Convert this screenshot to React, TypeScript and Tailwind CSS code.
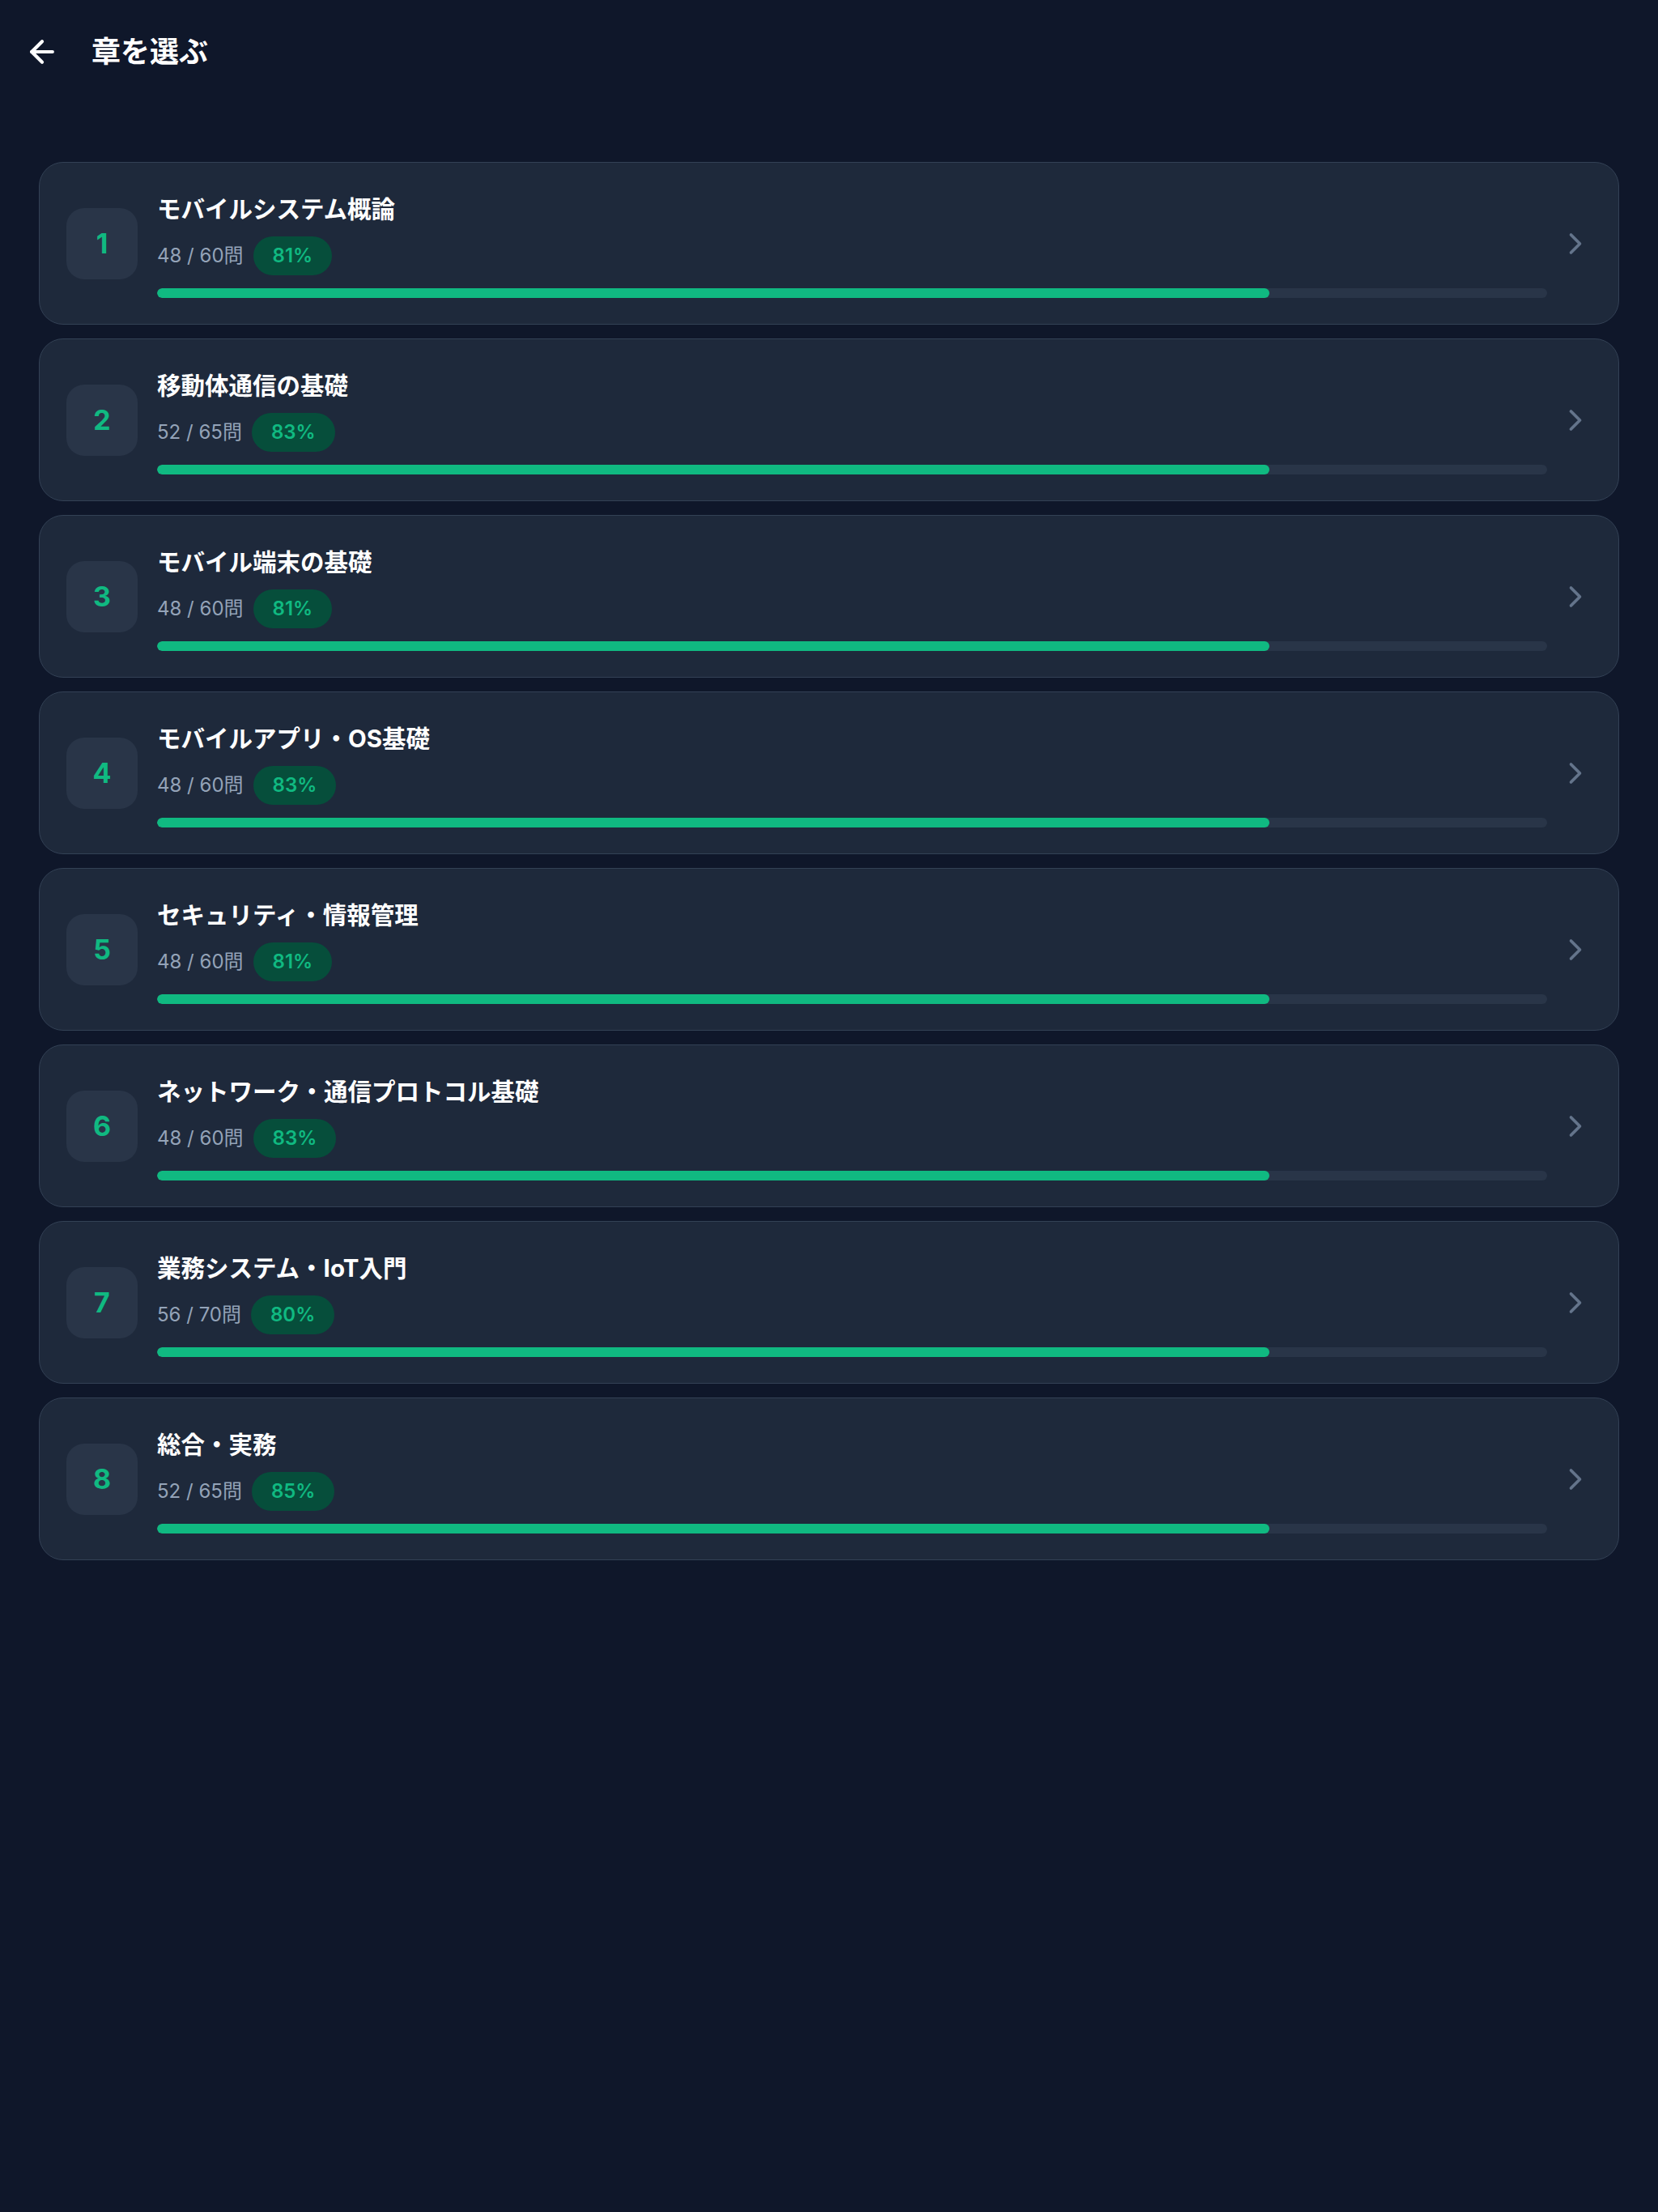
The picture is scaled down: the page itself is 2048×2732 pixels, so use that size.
import { ArrowLeft, ChevronRight } from 'lucide-react'

const chapters = [
  { no: 1, title: 'モバイルシステム概論', done: 48, total: 60, pct: 81 },
  { no: 2, title: '移動体通信の基礎', done: 52, total: 65, pct: 83 },
  { no: 3, title: 'モバイル端末の基礎', done: 48, total: 60, pct: 81 },
  { no: 4, title: 'モバイルアプリ・OS基礎', done: 48, total: 60, pct: 83 },
  { no: 5, title: 'セキュリティ・情報管理', done: 48, total: 60, pct: 81 },
  { no: 6, title: 'ネットワーク・通信プロトコル基礎', done: 48, total: 60, pct: 83 },
  { no: 7, title: '業務システム・IoT入門', done: 56, total: 70, pct: 80 },
  { no: 8, title: '総合・実務', done: 52, total: 65, pct: 85 },
]

const App = () => {
  return (
    <div className="min-h-[2732px] bg-[#0f172a] font-['Inter','Noto_Sans_CJK_JP',sans-serif] text-white">
      <div className="flex items-center h-[128px] pl-[30px]">
        <button className="flex items-center justify-center text-white">
          <ArrowLeft size={44} strokeWidth={2.3} />
        </button>
        <h1 className="ml-[39px] text-[36px] font-bold leading-none">章を選ぶ</h1>
      </div>
      <div className="flex flex-col gap-[17px] px-[48px] pt-[72px]">
        {chapters.map((c) => (
          <div
            key={c.no}
            className="flex items-center h-[201px] bg-[#1e293b] border border-[#334155] rounded-[30px] pl-[33px] pr-[31px] cursor-pointer"
          >
            <div className="flex items-center justify-center shrink-0 w-[88px] h-[88px] rounded-[22px] bg-[#293548] text-[#10b981] text-[34px] font-bold">
              {c.no}
            </div>
            <div className="flex flex-col flex-1 ml-[24px] pt-[4px]">
              <p className="text-[29.5px] leading-[40px] font-bold text-white">{c.title}</p>
              <div className="flex items-center gap-[12px] mt-[14px]">
                <span className="text-[24px] text-[#94a3b8]">
                  {c.done} / {c.total}問
                </span>
                <span className="flex items-center h-[48px] px-[24px] rounded-full bg-[#064e3b] text-[#10b981] text-[24px] font-semibold">
                  {c.pct}%
                </span>
              </div>
              <div className="mt-[16px] h-[12px] rounded-full bg-[#293548] overflow-hidden">
                <div className="h-full w-[80%] rounded-full bg-[#10b981]"></div>
              </div>
            </div>
            <div className="ml-[13px] text-[#64748b]">
              <ChevronRight size={44} strokeWidth={2} />
            </div>
          </div>
        ))}
      </div>
    </div>
  )
}

export default App
